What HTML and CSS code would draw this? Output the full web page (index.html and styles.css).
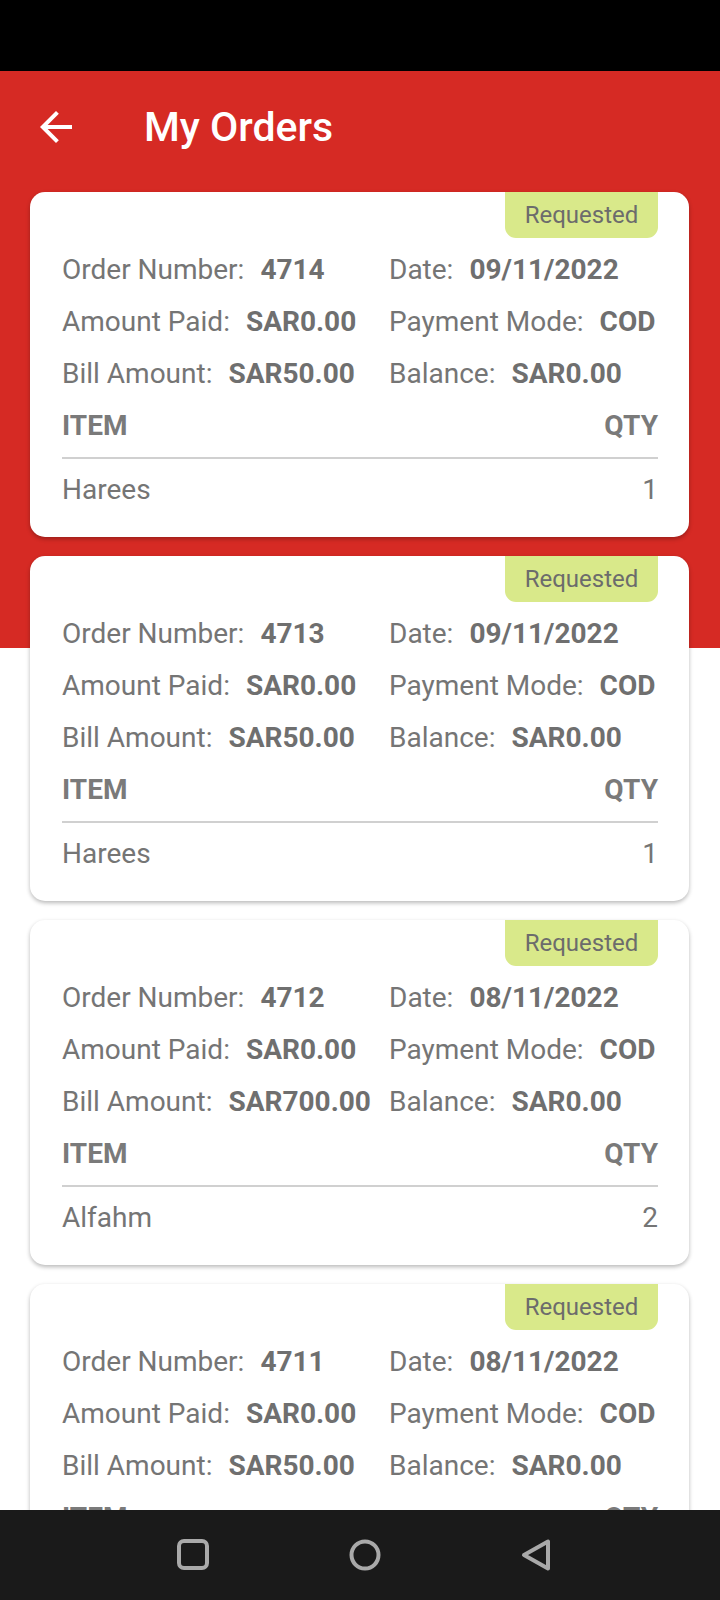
FILE: index.html
```html
<!DOCTYPE html>
<html>
<head>
<meta charset="utf-8">
<link rel="stylesheet" href="styles.css">
</head>
<body>
<div class="screen">
  <div class="statusbar"></div>
  <div class="page">
    <header class="appbar">
      <svg class="back" viewBox="0 0 24 24" width="48" height="48"><path fill="#fff" d="M20 11H7.83l5.59-5.59L12 4l-8 8 8 8 1.41-1.41L7.83 13H20v-2z"/></svg>
      <h1 class="title">My Orders</h1>
    </header>
    <main class="list">
      <section class="card">
        <div class="badge">Requested</div>
        <div class="info">
          <div class="row"><span class="lbl">Order Number:</span><b class="val">4714</b></div>
          <div class="row"><span class="lbl">Date:</span><b class="val">09/11/2022</b></div>
          <div class="row"><span class="lbl">Amount Paid:</span><b class="val">SAR0.00</b></div>
          <div class="row"><span class="lbl">Payment Mode:</span><b class="val">COD</b></div>
          <div class="row"><span class="lbl">Bill Amount:</span><b class="val">SAR50.00</b></div>
          <div class="row"><span class="lbl">Balance:</span><b class="val">SAR0.00</b></div>
        </div>
        <div class="thead"><span>ITEM</span><span>QTY</span></div>
        <div class="divider"></div>
        <div class="trow"><span>Harees</span><span>1</span></div>
      </section>
      <section class="card">
        <div class="badge">Requested</div>
        <div class="info">
          <div class="row"><span class="lbl">Order Number:</span><b class="val">4713</b></div>
          <div class="row"><span class="lbl">Date:</span><b class="val">09/11/2022</b></div>
          <div class="row"><span class="lbl">Amount Paid:</span><b class="val">SAR0.00</b></div>
          <div class="row"><span class="lbl">Payment Mode:</span><b class="val">COD</b></div>
          <div class="row"><span class="lbl">Bill Amount:</span><b class="val">SAR50.00</b></div>
          <div class="row"><span class="lbl">Balance:</span><b class="val">SAR0.00</b></div>
        </div>
        <div class="thead"><span>ITEM</span><span>QTY</span></div>
        <div class="divider"></div>
        <div class="trow"><span>Harees</span><span>1</span></div>
      </section>
      <section class="card">
        <div class="badge">Requested</div>
        <div class="info">
          <div class="row"><span class="lbl">Order Number:</span><b class="val">4712</b></div>
          <div class="row"><span class="lbl">Date:</span><b class="val">08/11/2022</b></div>
          <div class="row"><span class="lbl">Amount Paid:</span><b class="val">SAR0.00</b></div>
          <div class="row"><span class="lbl">Payment Mode:</span><b class="val">COD</b></div>
          <div class="row"><span class="lbl">Bill Amount:</span><b class="val">SAR700.00</b></div>
          <div class="row"><span class="lbl">Balance:</span><b class="val">SAR0.00</b></div>
        </div>
        <div class="thead"><span>ITEM</span><span>QTY</span></div>
        <div class="divider"></div>
        <div class="trow"><span>Alfahm</span><span>2</span></div>
      </section>
      <section class="card">
        <div class="badge">Requested</div>
        <div class="info">
          <div class="row"><span class="lbl">Order Number:</span><b class="val">4711</b></div>
          <div class="row"><span class="lbl">Date:</span><b class="val">08/11/2022</b></div>
          <div class="row"><span class="lbl">Amount Paid:</span><b class="val">SAR0.00</b></div>
          <div class="row"><span class="lbl">Payment Mode:</span><b class="val">COD</b></div>
          <div class="row"><span class="lbl">Bill Amount:</span><b class="val">SAR50.00</b></div>
          <div class="row"><span class="lbl">Balance:</span><b class="val">SAR0.00</b></div>
        </div>
        <div class="thead"><span>ITEM</span><span>QTY</span></div>
        <div class="divider"></div>
        <div class="trow"><span>Harees</span><span>1</span></div>
      </section>
    </main>
  </div>
  <nav class="navbar">
    <svg class="nav-icon" viewBox="0 0 40 40" width="40" height="40"><rect x="6" y="6" width="28" height="27" rx="5" fill="none" stroke="#a9a9a9" stroke-width="4"/></svg>
    <svg class="nav-icon" viewBox="0 0 40 40" width="40" height="40"><circle cx="20" cy="20" r="13.5" fill="none" stroke="#a9a9a9" stroke-width="4"/></svg>
    <svg class="nav-icon" viewBox="0 0 40 40" width="40" height="40"><path d="M8 20 L32 6.5 L32 33.5 Z" fill="none" stroke="#a9a9a9" stroke-width="4" stroke-linejoin="round"/></svg>
  </nav>
</div>
</body>
</html>
```
FILE: styles.css
```css
* { box-sizing: border-box; }
html, body { margin: 0; padding: 0; }
body {
  font-family: Roboto, "Liberation Sans", sans-serif;
  background: #fff;
}
.screen {
  position: relative;
  width: 720px;
  height: 1600px;
  overflow: hidden;
  background: #fff;
}
.statusbar {
  height: 71px;
  background: #000;
}
.page {
  background: linear-gradient(to bottom, #d62a24 0, #d62a24 577px, #ffffff 577px);
}
.appbar {
  height: 112px;
  display: flex;
  align-items: center;
  padding-left: 32px;
}
.back { display: block; }
.title {
  margin: 0 0 0 64px;
  color: #fff;
  font-size: 41px;
  font-weight: 500;
  line-height: normal;
}
.list {
  padding: 9px 31px 0 30px;
  display: flex;
  flex-direction: column;
  gap: 19px;
}
.card {
  background: #fff;
  border-radius: 15px;
  box-shadow: 0 2px 4px rgba(0,0,0,0.28);
  padding: 0 31px 21px 32px;
  display: flex;
  flex-direction: column;
  color: #757575;
  font-size: 28px;
}
.badge {
  align-self: flex-end;
  width: 153px;
  height: 46px;
  background: #d9e98a;
  border-radius: 0 0 11px 11px;
  color: #6c6c6c;
  font-size: 24px;
  display: flex;
  align-items: center;
  justify-content: center;
}
.info {
  margin-top: 6px;
  display: grid;
  grid-template-columns: 327px 1fr;
}
.row {
  line-height: 52px;
  height: 52px;
  white-space: nowrap;
}
.lbl { color: #757575; }
.val {
  font-weight: 700;
  color: #6f6f6f;
  margin-left: 16px;
}
.thead {
  display: flex;
  justify-content: space-between;
  line-height: 52px;
  height: 52px;
  font-weight: 700;
  color: #7a7a7a;
}
.divider {
  margin-top: 5px;
  height: 2px;
  background: #d0d0d0;
}
.trow {
  margin-top: 5px;
  display: flex;
  justify-content: space-between;
  line-height: 52px;
  height: 52px;
  color: #757575;
}
.navbar {
  position: absolute;
  left: 0;
  bottom: 0;
  width: 720px;
  height: 90px;
  background: #1a1a1a;
  display: flex;
  align-items: center;
  justify-content: center;
  gap: 131.5px;
  padding-left: 9px;
}
.nav-icon { display: block; }
```
